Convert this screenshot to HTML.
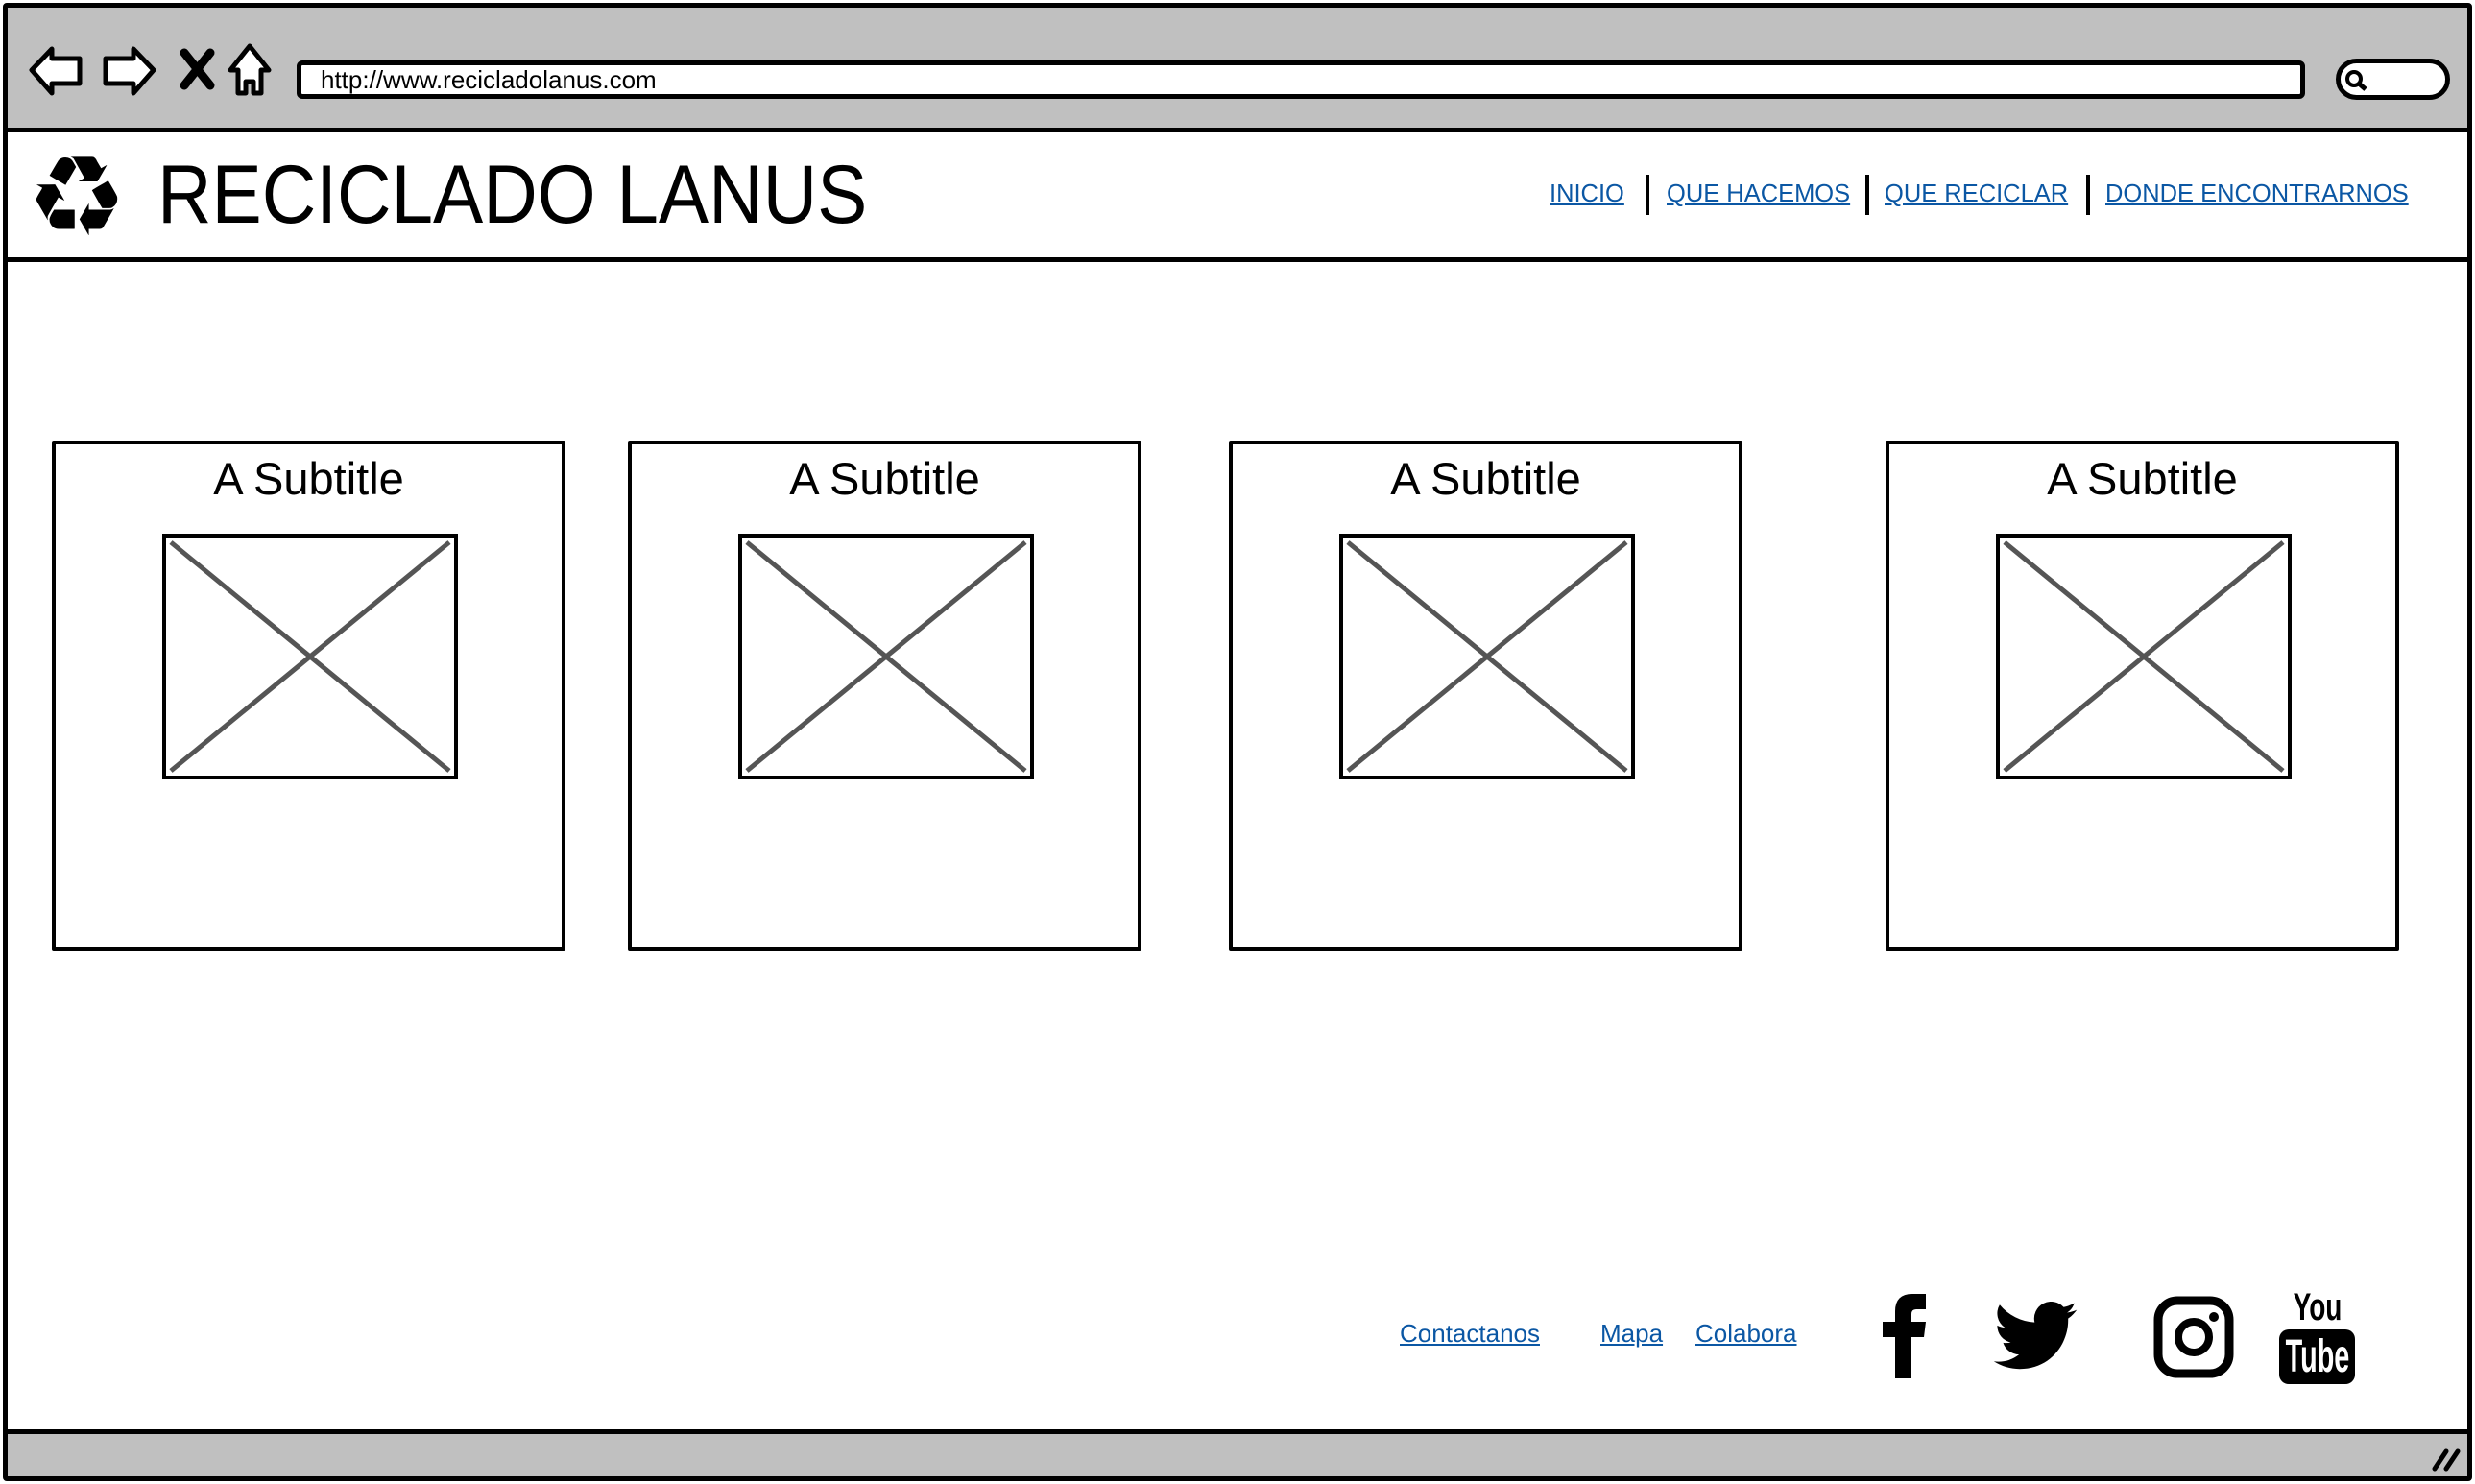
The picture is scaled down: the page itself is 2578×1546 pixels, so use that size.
<!DOCTYPE html>
<html><head><meta charset="utf-8"><style>
*{margin:0;padding:0;box-sizing:border-box}
body{width:2578px;height:1546px;background:#fff;position:relative;overflow:hidden;font-family:"Liberation Sans",sans-serif}
.a{position:absolute}
.card{position:absolute;top:459px;width:535px;height:532px;border:4px solid #000;border-radius:2px;background:#fff}
.card .t{position:absolute;top:8px;left:0;width:100%;text-align:center;font-size:47px;color:#000}
.card svg{position:absolute;left:111px;top:93px}
.nav{position:absolute;top:186px;font-size:26px;color:#0b57a4;text-decoration:underline;white-space:nowrap;transform:scaleX(0.98);transform-origin:left top}
.sep{position:absolute;top:182px;width:4px;height:42px;background:#000}
.ft{position:absolute;top:1374px;font-size:26px;color:#0b57a4;text-decoration:underline}
</style></head><body>
<div class="a" style="left:3px;top:3px;width:2572px;height:1540px;border:5px solid #000;border-radius:4px"></div>
<div class="a" style="left:8px;top:8px;width:2562px;height:130px;background:#c0c0c0;border-bottom:5px solid #000"></div>
<div class="a" style="left:8px;top:138px;width:2562px;height:135px;background:#fff;border-bottom:5px solid #000"></div>
<div class="a" style="left:8px;top:1489px;width:2562px;height:49px;background:#c0c0c0;border-top:5px solid #000"></div>
<svg class="a" style="left:28px;top:45px" width="270" height="60" viewBox="0 0 270 60">
 <path d="M5 28 L26 6 L26 16 L55 16 L55 42 L26 42 L26 52 Z" fill="#fff" stroke="#000" stroke-width="5" stroke-linejoin="round"/>
 <path d="M132 28 L111 6 L111 16 L82 16 L82 42 L111 42 L111 52 Z" fill="#fff" stroke="#000" stroke-width="5" stroke-linejoin="round"/>
 <path d="M164 10 L191 44 M191 10 L164 44" stroke="#000" stroke-width="9" stroke-linecap="round"/>
 <path d="M232 3 L252 28 L244 28 L244 52 L236 52 L236 40 L228 40 L228 52 L220 52 L220 28 L212 28 Z" fill="#fff" stroke="#000" stroke-width="5" stroke-linejoin="round"/>
</svg>
<div class="a" style="left:309px;top:63px;width:2092px;height:40px;background:#fff;border:5px solid #000;border-radius:6px"></div>
<div class="a" style="left:334px;top:68px;font-size:26px;color:#000">http://www.recicladolanus.com</div>
<div class="a" style="left:2433px;top:61px;width:119px;height:43px;background:#fff;border:5px solid #000;border-radius:22px"></div>
<svg class="a" style="left:2440px;top:70px" width="30" height="26"><circle cx="12" cy="12" r="7" fill="none" stroke="#000" stroke-width="4"/><path d="M17 17 L24 23" stroke="#000" stroke-width="5"/></svg>
<div class="a" style="left:28px;top:146px;font-size:116px;line-height:120px;font-family:'DejaVu Sans',sans-serif;color:#000">♻</div>
<div class="a" style="left:164px;top:153px;font-size:86px;line-height:100px;color:#000;transform:scaleX(0.91);transform-origin:left top;white-space:nowrap">RECICLADO LANUS</div>
<div class="nav" style="left:1614px">INICIO</div>
<div class="sep" style="left:1714px"></div>
<div class="nav" style="left:1736px">QUE HACEMOS</div>
<div class="sep" style="left:1943px"></div>
<div class="nav" style="left:1963px">QUE RECICLAR</div>
<div class="sep" style="left:2173px"></div>
<div class="nav" style="left:2193px">DONDE ENCONTRARNOS</div>
<div class="card" style="left:54px"><div class="t">A Subtitle</div><svg width="308" height="256"><rect x="2" y="2" width="304" height="252" fill="#fff" stroke="#000" stroke-width="4"/><path d="M9 9 L299 247 M299 9 L9 247" stroke="#555" stroke-width="5"/></svg></div>
<div class="card" style="left:654px"><div class="t">A Subtitle</div><svg width="308" height="256"><rect x="2" y="2" width="304" height="252" fill="#fff" stroke="#000" stroke-width="4"/><path d="M9 9 L299 247 M299 9 L9 247" stroke="#555" stroke-width="5"/></svg></div>
<div class="card" style="left:1280px"><div class="t">A Subtitle</div><svg width="308" height="256"><rect x="2" y="2" width="304" height="252" fill="#fff" stroke="#000" stroke-width="4"/><path d="M9 9 L299 247 M299 9 L9 247" stroke="#555" stroke-width="5"/></svg></div>
<div class="card" style="left:1964px"><div class="t">A Subtitle</div><svg width="308" height="256"><rect x="2" y="2" width="304" height="252" fill="#fff" stroke="#000" stroke-width="4"/><path d="M9 9 L299 247 M299 9 L9 247" stroke="#555" stroke-width="5"/></svg></div>
<div class="ft" style="left:1458px">Contactanos</div>
<div class="ft" style="left:1667px">Mapa</div>
<div class="ft" style="left:1766px">Colabora</div>
<svg class="a" style="left:1960px;top:1346px" width="48" height="90" viewBox="0 0 48 90"><path d="M14 90 V47 H1 V31 H14 V20 Q14 2 32 2 H46 V18 H36 Q31 18 31 23 V31 H46 L44 47 H31 V90 Z" fill="#000"/></svg>
<svg class="a" style="left:2076px;top:1356px" width="88" height="72" viewBox="0 0 24 20"><path d="M24 2.4a9.8 9.8 0 0 1-2.8.8A4.9 4.9 0 0 0 23.3.4a9.9 9.9 0 0 1-3.100 1.2A4.9 4.9 0 0 0 11.8 6 14 14 0 0 1 1.7.9a4.9 4.9 0 0 0 1.5 6.6A4.9 4.9 0 0 1 1 6.9v.1a4.9 4.9 0 0 0 3.9 4.8 4.9 4.9 0 0 1-2.2.1 4.9 4.9 0 0 0 4.6 3.4A9.9 9.9 0 0 1 0 17.3 14 14 0 0 0 7.5 19.5c9.1 0 14-7.5 14-14v-.6A10 10 0 0 0 24 2.4z" fill="#000"/></svg>
<svg class="a" style="left:2243px;top:1350px" width="84" height="86" viewBox="0 0 84 86"><rect x="5" y="5" width="74" height="76" rx="20" fill="none" stroke="#000" stroke-width="9"/><circle cx="42" cy="43" r="16" fill="none" stroke="#000" stroke-width="8"/><circle cx="63" cy="22" r="5" fill="#000"/></svg>
<div class="a" style="left:2334px;top:1342px;width:160px;text-align:center;font-size:40px;font-weight:bold;line-height:40px;white-space:nowrap;transform:scaleX(0.7);transform-origin:center top;color:#000">You</div>
<div class="a" style="left:2374px;top:1385px;width:79px;height:57px;background:#000;border-radius:10px"></div>
<div class="a" style="left:2334px;top:1388px;width:160px;text-align:center;font-size:48px;font-weight:bold;line-height:52px;white-space:nowrap;transform:scaleX(0.6);transform-origin:center top;color:#fff">Tube</div>
<svg class="a" style="left:2530px;top:1504px" width="36" height="30"><path d="M6 26 L18 8 M18 26 L30 8" stroke="#000" stroke-width="5" stroke-linecap="round"/></svg>
</body></html>
